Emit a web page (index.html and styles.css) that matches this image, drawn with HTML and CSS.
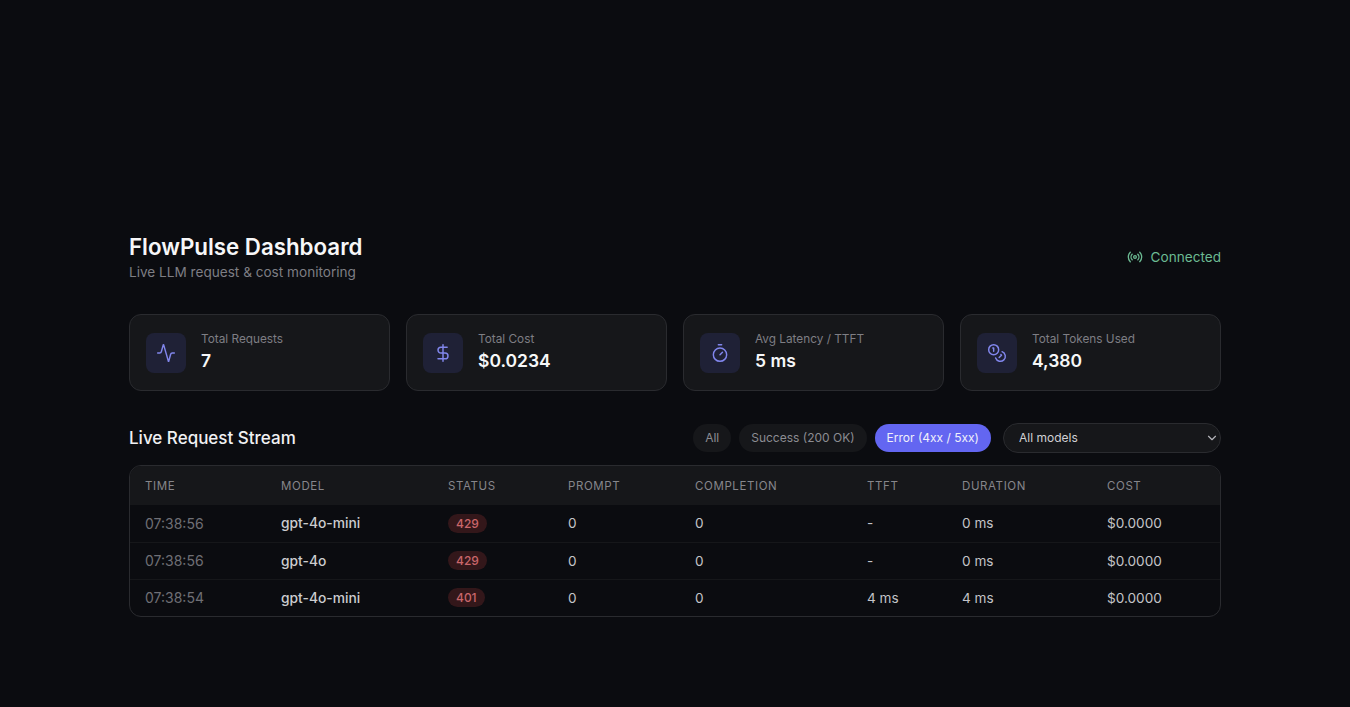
FILE: index.html
```html
<!DOCTYPE html>
<html lang="en">
<head>
<meta charset="utf-8">
<title>FlowPulse Dashboard</title>
<link rel="stylesheet" href="styles.css">
</head>
<body>
<main class="page">
  <header class="header">
    <div>
      <h1 class="title">FlowPulse Dashboard</h1>
      <p class="subtitle">Live LLM request &amp; cost monitoring</p>
    </div>
    <div class="conn">
      <svg class="conn-icon" viewBox="0 0 24 24"><path d="M4.9 19.1C1 15.2 1 8.8 4.9 4.9"/><path d="M7.8 16.2c-2.3-2.3-2.3-6.1 0-8.5"/><circle cx="12" cy="12" r="2"/><path d="M16.2 7.8c2.3 2.3 2.3 6.1 0 8.5"/><path d="M19.1 4.9C23 8.8 23 15.1 19.1 19"/></svg>
      <span>Connected</span>
    </div>
  </header>

  <section class="cards">
    <div class="card">
      <div class="card-icon"><svg viewBox="0 0 24 24"><path d="M22 12h-2.5a2 2 0 0 0-1.9 1.5l-2.3 8.3a.25.25 0 0 1-.5 0L9.2 2.2a.25.25 0 0 0-.5 0L6.4 10.5A2 2 0 0 1 4.5 12H2"/></svg></div>
      <div class="card-text"><div class="card-label">Total Requests</div><div class="card-value">7</div></div>
    </div>
    <div class="card">
      <div class="card-icon"><svg viewBox="0 0 24 24"><line x1="12" y1="2" x2="12" y2="22"/><path d="M17 5H9.5a3.5 3.5 0 0 0 0 7h5a3.5 3.5 0 0 1 0 7H6"/></svg></div>
      <div class="card-text"><div class="card-label">Total Cost</div><div class="card-value">$0.0234</div></div>
    </div>
    <div class="card">
      <div class="card-icon"><svg viewBox="0 0 24 24"><line x1="10" y1="2" x2="14" y2="2"/><line x1="12" y1="14" x2="15" y2="11"/><circle cx="12" cy="14" r="8"/></svg></div>
      <div class="card-text"><div class="card-label">Avg Latency / TTFT</div><div class="card-value">5 ms</div></div>
    </div>
    <div class="card">
      <div class="card-icon"><svg viewBox="0 0 24 24"><circle cx="8" cy="8" r="6"/><path d="M18.09 10.37A6 6 0 1 1 10.34 18"/><path d="M7 6h1v4"/><path d="m16.71 13.88.7.71-2.82 2.82"/></svg></div>
      <div class="card-text"><div class="card-label">Total Tokens Used</div><div class="card-value">4,380</div></div>
    </div>
  </section>

  <section class="stream-head">
    <h2 class="stream-title">Live Request Stream</h2>
    <div class="controls">
      <button class="pill">All</button>
      <button class="pill">Success (200 OK)</button>
      <button class="pill pill-active">Error (4xx / 5xx)</button>
      <div class="select-wrap">
        <select class="select"><option>All models</option></select>
        <svg class="chevron" viewBox="0 0 24 24"><path d="m6 9 6 6 6-6"/></svg>
      </div>
    </div>
  </section>

  <div class="table-wrap">
    <table class="table">
      <colgroup>
        <col class="c1"><col class="c2"><col class="c3"><col class="c4"><col class="c5"><col class="c6"><col class="c7"><col class="c8">
      </colgroup>
      <thead>
        <tr><th>Time</th><th>Model</th><th>Status</th><th>Prompt</th><th>Completion</th><th>TTFT</th><th>Duration</th><th>Cost</th></tr>
      </thead>
      <tbody>
        <tr><td class="time">07:38:56</td><td class="model">gpt-4o-mini</td><td><span class="badge">429</span></td><td>0</td><td>0</td><td>-</td><td>0 ms</td><td>$0.0000</td></tr>
        <tr><td class="time">07:38:56</td><td class="model">gpt-4o</td><td><span class="badge">429</span></td><td>0</td><td>0</td><td>-</td><td>0 ms</td><td>$0.0000</td></tr>
        <tr><td class="time">07:38:54</td><td class="model">gpt-4o-mini</td><td><span class="badge">401</span></td><td>0</td><td>0</td><td>4 ms</td><td>4 ms</td><td>$0.0000</td></tr>
      </tbody>
    </table>
  </div>
</main>
</body>
</html>
```

FILE: styles.css
```css
* { box-sizing: border-box; }
html, body { margin: 0; height: 100%; }
body {
  background: #0b0c10;
  color: #e4e4e7;
  font-family: Inter, "Liberation Sans", sans-serif;
}
.page {
  width: 1092px;
  margin: 0 auto;
  padding-top: 232px;
}
.header {
  display: flex;
  justify-content: space-between;
  align-items: center;
  margin-bottom: 33px;
}
.title {
  margin: 0;
  font-size: 22.3px;
  line-height: 29px;
  font-weight: 600;
  color: #f7f7f8;
}
.subtitle {
  margin: 3px 0 0;
  font-size: 13.6px;
  line-height: 17px;
  color: #7e7e84;
}
.conn {
  display: flex;
  align-items: center;
  gap: 8px;
  font-size: 13.6px;
  line-height: 16px;
  color: #6cbb93;
}
.conn-icon {
  width: 16px;
  height: 16px;
  fill: none;
  stroke: currentColor;
  stroke-width: 2;
  stroke-linecap: round;
  stroke-linejoin: round;
}
.cards {
  display: grid;
  grid-template-columns: repeat(4, 1fr);
  gap: 16px;
  margin-bottom: 32px;
}
.card {
  display: flex;
  align-items: center;
  gap: 15px;
  height: 77px;
  padding: 0 16px;
  background: #16171a;
  border: 1px solid #2a2b2f;
  border-radius: 12px;
}
.card-text {
  padding-bottom: 2px;
}
.card-icon {
  width: 40px;
  height: 40px;
  flex: none;
  display: flex;
  align-items: center;
  justify-content: center;
  background: #1f2136;
  border-radius: 8px;
}
.card-icon svg {
  width: 20px;
  height: 20px;
  fill: none;
  stroke: #8186ec;
  stroke-width: 1.75;
  stroke-linecap: round;
  stroke-linejoin: round;
}
.card-label {
  font-size: 11.8px;
  line-height: 15px;
  color: #7e7e84;
}
.card-value {
  margin-top: 3px;
  font-size: 17.5px;
  line-height: 22px;
  font-weight: 600;
  color: #f7f7f8;
}
.stream-head {
  display: flex;
  justify-content: space-between;
  align-items: center;
  margin-bottom: 12px;
}
.stream-title {
  margin: 0 0 1px;
  font-size: 17px;
  line-height: 22px;
  font-weight: 500;
  color: #f1f1f3;
}
.controls {
  display: flex;
  align-items: center;
  gap: 8px;
}
.pill {
  height: 28px;
  padding: 0 12px 1px;
  border: 0;
  border-radius: 14px;
  background: #16171a;
  color: #8c8c92;
  font: 400 12px Inter, "Liberation Sans", sans-serif;
}
.pill-active {
  background: #6366f1;
  color: #f0f0fa;
}
.select-wrap {
  position: relative;
  margin-left: 4px;
}
.select {
  display: block;
  width: 218px;
  height: 30px;
  padding: 0 15px 1px;
  appearance: none;
  background: #16171a;
  border: 1px solid #2a2b2f;
  border-radius: 15px;
  color: #d0d0d4;
  font: 400 12px Inter, "Liberation Sans", sans-serif;
}
.chevron {
  position: absolute;
  right: 2px;
  top: 8px;
  width: 14px;
  height: 14px;
  fill: none;
  stroke: #b4b4ba;
  stroke-width: 2;
  stroke-linecap: round;
  stroke-linejoin: round;
  pointer-events: none;
}
.table-wrap {
  border: 1px solid #2a2b2f;
  border-radius: 12px;
  overflow: hidden;
}
.table {
  width: 100%;
  border-collapse: collapse;
  table-layout: fixed;
  font-size: 13.6px;
}
.c1 { width: 136px; }
.c2 { width: 167px; }
.c3 { width: 120px; }
.c4 { width: 127px; }
.c5 { width: 172px; }
.c6 { width: 95px; }
.c7 { width: 145px; }
th {
  height: 39px;
  padding: 0 15px;
  text-align: left;
  font-size: 11.5px;
  font-weight: 400;
  letter-spacing: 0.6px;
  text-transform: uppercase;
  color: #86868b;
  background: #16171a;
}
td {
  height: 37px;
  padding: 0 15px;
  color: #c4c4c8;
  border-top: 1px solid #16171a;
}
tbody tr:first-child td { border-top: 0; }
.time { color: #6f6f75; font-size: 14px; }
.model { color: #cccccf; font-size: 13.8px; font-weight: 500; }
.badge {
  display: inline-block;
  padding: 2px 8px;
  border-radius: 10px;
  background: #33171a;
  color: #c9666a;
  font-size: 12px;
  line-height: 15px;
  font-weight: 500;
}
```
